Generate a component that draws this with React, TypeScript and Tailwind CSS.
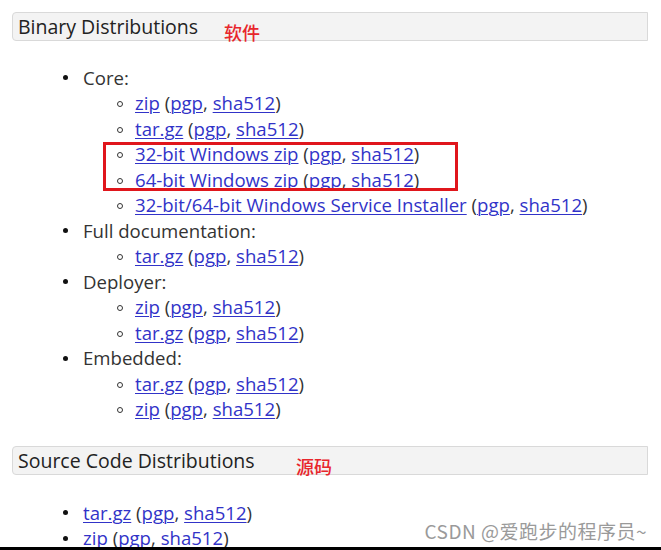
import React from 'react';

const LINK = 'text-[#3133c8] underline underline-offset-[2px] decoration-1';

function Artifact({ name }: { name: string }) {
  return (
    <span className="whitespace-nowrap">
      <a className={LINK}>{name}</a> (<a className={LINK}>pgp</a>, <a className={LINK}>sha512</a>)
    </span>
  );
}

function Disc() {
  return <span className="w-[5px] h-[5px] rounded-full bg-[#111] mr-[15px] shrink-0" />;
}

function Circle() {
  return <span className="w-[6px] h-[6px] rounded-full border border-[#333] mr-[12px] shrink-0 mt-[2px]" />;
}

function Group({ title, items, boxed }: { title: string; items: string[]; boxed?: [number, number] }) {
  return (
    <li>
      <div className="flex items-center h-[25.5px] pl-[63px]">
        <Disc />
        <span>{title}</span>
      </div>
      <ul className="relative">
        {items.map((it) => (
          <li key={it} className="flex items-center h-[25.5px] pl-[117px]">
            <Circle />
            <Artifact name={it} />
          </li>
        ))}
        {boxed && (
          <div
            className="absolute left-[103px] w-[355px] border-[3px] border-[#e0161c] pointer-events-none"
            style={{ top: boxed[0] * 25.5, height: (boxed[1] - boxed[0]) * 25.5 - 2 }}
          />
        )}
      </ul>
    </li>
  );
}

function Header({ title, note, noteLeft }: { title: string; note: string; noteLeft: string }) {
  return (
    <div className="relative ml-[12px] w-[636px] h-[29px] bg-[#f3f3f3] border border-[#d9d9d9] rounded-l-[4px] flex items-center pl-[5px] text-[19.5px] text-[#222]">
      {title}
      <span
        className={`absolute ${noteLeft} top-[10px] text-[18px] leading-none font-medium text-[#e8262c]`}
        style={{ fontFamily: '"Noto Sans CJK SC", sans-serif' }}
      >
        {note}
      </span>
    </div>
  );
}

export default function App() {
  return (
    <div
      className="w-[661px] h-[550px] bg-white flex flex-col relative overflow-hidden text-[18.6px] text-[#333]"
      style={{ fontFamily: '"Open Sans", "Noto Sans", sans-serif' }}
    >
      <div className="flex-1 overflow-hidden pt-[12px]">
        <Header title="Binary Distributions" note="软件" noteLeft="left-[211px]" />
        <ul className="mt-[24px]">
          <Group
            title="Core:"
            items={['zip', 'tar.gz', '32-bit Windows zip', '64-bit Windows zip', '32-bit/64-bit Windows Service Installer']}
            boxed={[2, 4]}
          />
          <Group title="Full documentation:" items={['tar.gz']} />
          <Group title="Deployer:" items={['zip', 'tar.gz']} />
          <Group title="Embedded:" items={['tar.gz', 'zip']} />
        </ul>
        <div className="mt-[24px]">
          <Header title="Source Code Distributions" note="源码" noteLeft="left-[283px]" />
        </div>
        <ul className="mt-[25px]">
          {['tar.gz', 'zip'].map((it) => (
            <li key={it} className="flex items-center h-[25.5px] pl-[63px]">
              <Disc />
              <Artifact name={it} />
            </li>
          ))}
        </ul>
      </div>
      <span
        className="absolute right-[14px] bottom-[10px] text-[19px] tracking-[0.5px] text-[#9a9a9a] leading-none"
        style={{ fontFamily: '"Noto Sans CJK SC", sans-serif' }}
      >
        CSDN @爱跑步的程序员~
      </span>
      <div className="h-[3px] bg-black shrink-0" />
    </div>
  );
}
